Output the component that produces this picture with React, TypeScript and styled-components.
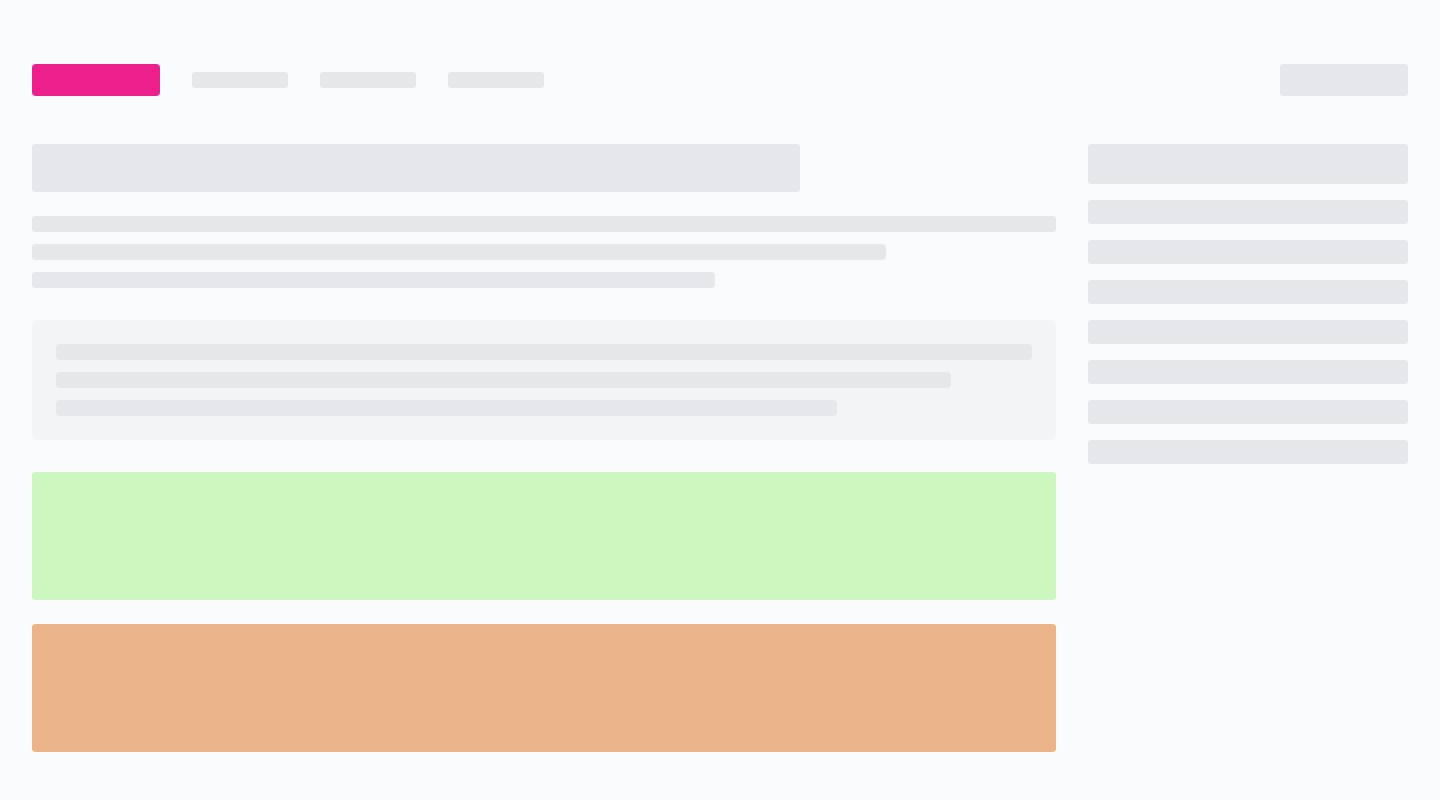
import React from 'react'
import styled, { createGlobalStyle } from 'styled-components'

const GlobalStyle = createGlobalStyle`
  html, body {
    margin: 0;
    padding: 0;
    background: #F9FAFB;
    font-family: Inter, "Liberation Sans", sans-serif;
  }
`;

const Page = styled.div`
  box-sizing: border-box;
  width: 1440px;
  min-height: 800px;
  padding: 64px 32px 48px;
  background: #F9FAFB;
`;

// 상단 바

const TopBar = styled.header`
  display: flex;
  align-items: center;
  height: 32px;
`;

const Logo = styled.div`
  width: 128px;
  height: 32px;
  border-radius: 4px;
  background: #EC1F8C;
`;

const NavList = styled.nav`
  display: flex;
  gap: 32px;
  margin-left: 32px;
`;

const NavItem = styled.div`
  width: 96px;
  height: 16px;
  border-radius: 4px;
  background: #E5E7EB;
`;

const ActionButton = styled.div`
  margin-left: auto;
  width: 128px;
  height: 32px;
  border-radius: 4px;
  background: #E5E7EB;
`;

// 본문

const Body = styled.div`
  display: grid;
  grid-template-columns: 1024px 320px;
  gap: 32px;
  margin-top: 48px;
`;

const MainColumn = styled.main`
  display: flex;
  flex-direction: column;
`;

const Title = styled.div`
  width: 75%;
  height: 48px;
  border-radius: 4px;
  background: #E5E7EB;
`;

const LineGroup = styled.div<{ $top?: number }>`
  display: flex;
  flex-direction: column;
  gap: 12px;
  margin-top: ${p => p.$top ?? 0}px;
`;

const Line = styled.div<{ $width: number }>`
  width: ${p => p.$width}%;
  height: 16px;
  border-radius: 4px;
  background: #E5E7EB;
`;

const Card = styled.section`
  margin-top: 32px;
  padding: 24px;
  border-radius: 8px;
  background: #F3F4F6;
`;

const Block = styled.div<{ $color: string; $top: number }>`
  margin-top: ${p => p.$top}px;
  height: 128px;
  border-radius: 4px;
  background: ${p => p.$color};
`;

// 사이드바

const Sidebar = styled.aside`
  display: flex;
  flex-direction: column;
  gap: 16px;
`;

const SideHeader = styled.div`
  height: 40px;
  border-radius: 4px;
  background: #E5E7EB;
`;

const SideItem = styled.div`
  height: 24px;
  border-radius: 4px;
  background: #E5E7EB;
`;

function App() {
  return (
    <Page>
      <GlobalStyle />
      <TopBar>
        <Logo />
        <NavList>
          <NavItem />
          <NavItem />
          <NavItem />
        </NavList>
        <ActionButton />
      </TopBar>
      <Body>
        <MainColumn>
          <Title />
          <LineGroup $top={24}>
            <Line $width={100} />
            <Line $width={83.4} />
            <Line $width={66.7} />
          </LineGroup>
          <Card>
            <LineGroup>
              <Line $width={100} />
              <Line $width={91.7} />
              <Line $width={80} />
            </LineGroup>
          </Card>
          <Block $color="#CEF7C0" $top={32} />
          <Block $color="#ECB48B" $top={24} />
        </MainColumn>
        <Sidebar>
          <SideHeader />
          {[0, 1, 2, 3, 4, 5, 6].map(i => (
            <SideItem key={i} />
          ))}
        </Sidebar>
      </Body>
    </Page>
  )
}

export default App
